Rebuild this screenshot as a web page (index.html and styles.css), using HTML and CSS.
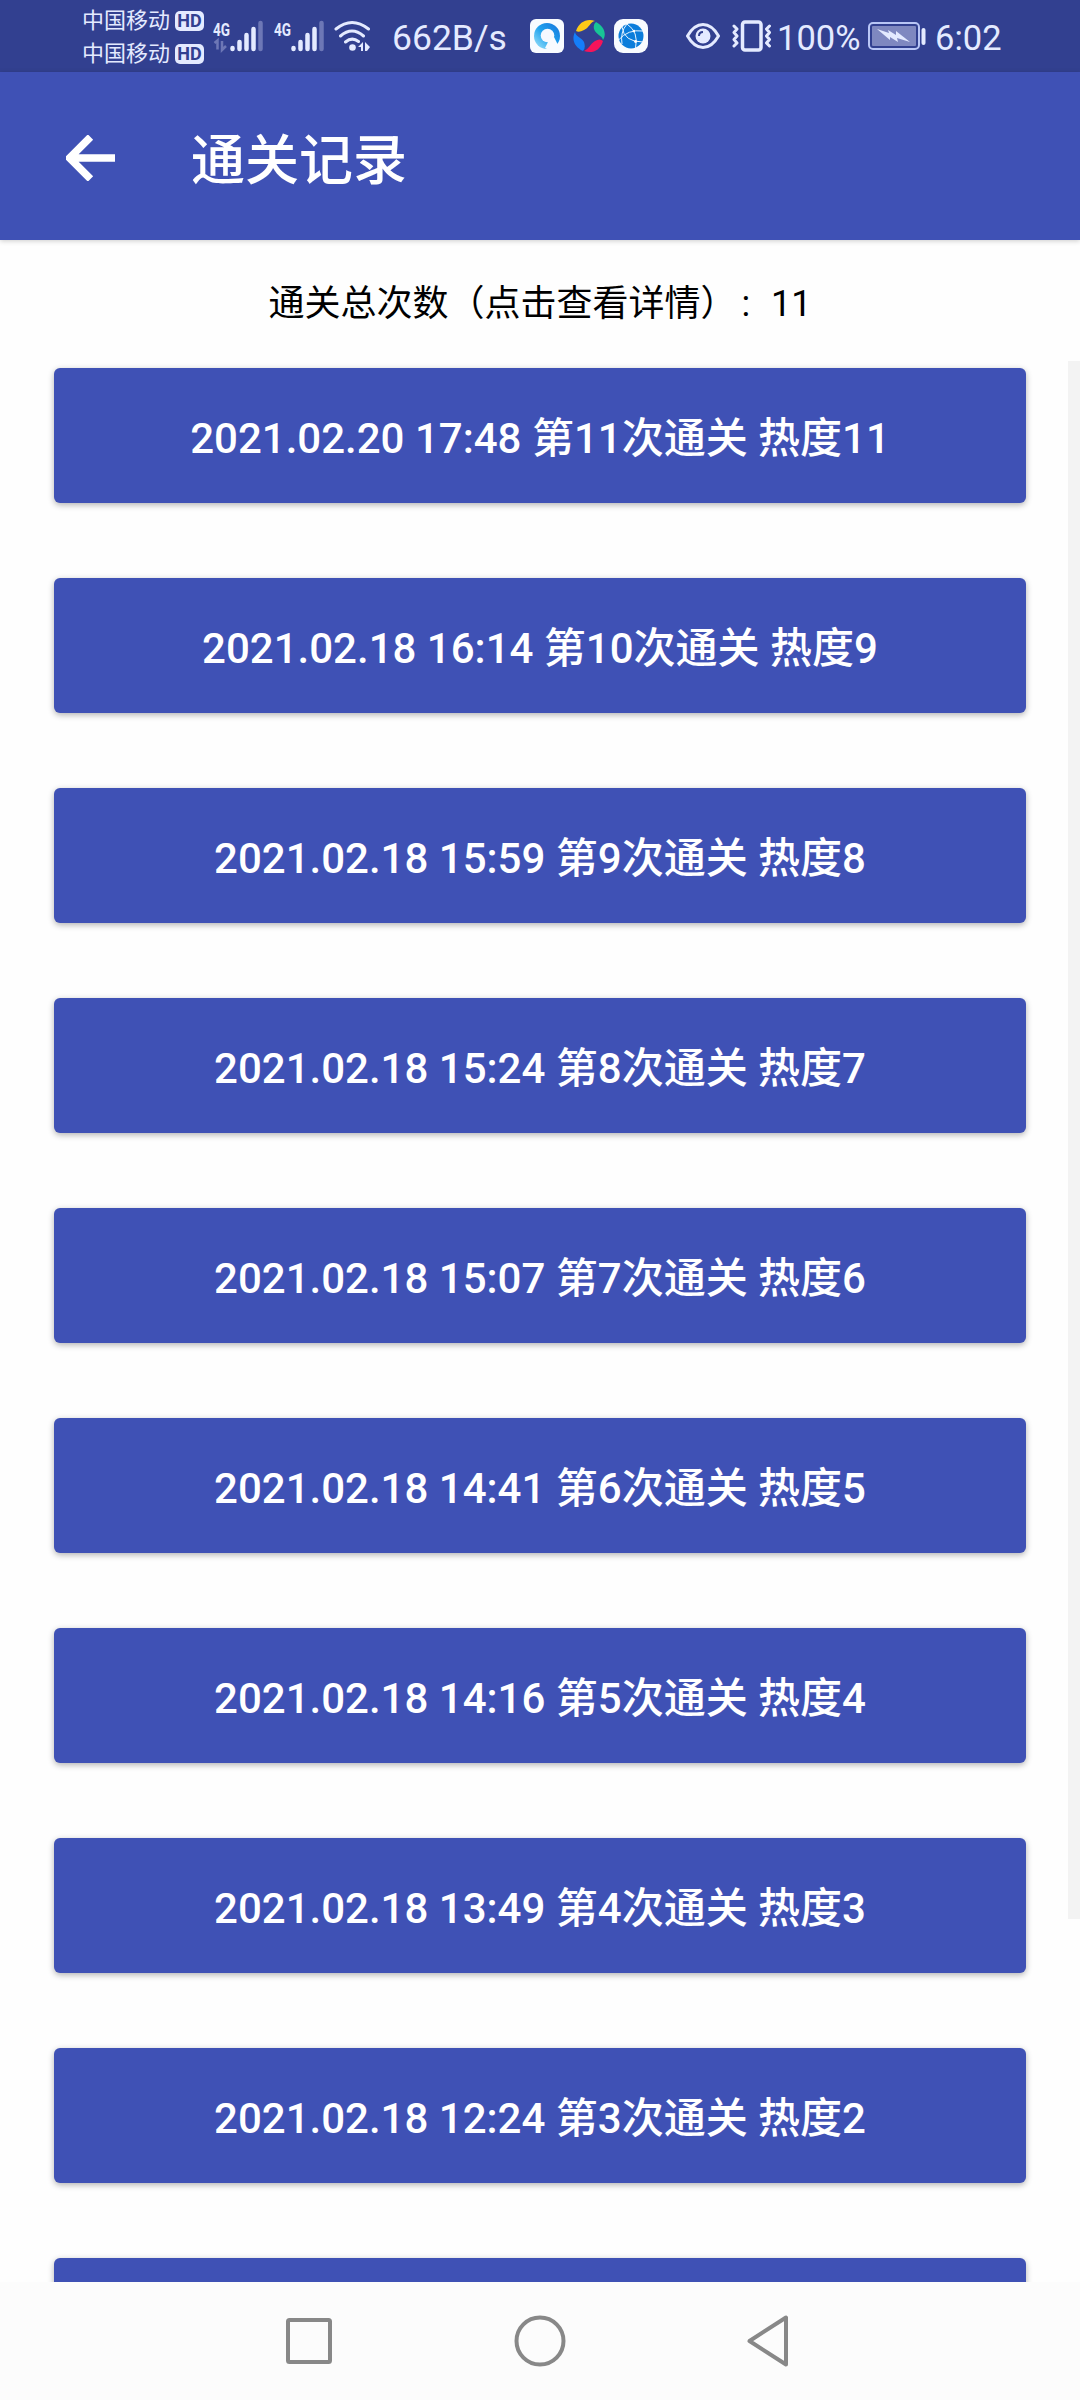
FILE: index.html
```html
<!DOCTYPE html>
<html lang="zh-CN">
<head>
    <meta charset="UTF-8">
    <meta name="viewport" content="width=device-width, initial-scale=1.0">
    <title>通关记录</title>
    <link rel="stylesheet" href="styles.css">
</head>
<body>
    <div class="screen">
        <div class="status-bar">
            <div class="carriers">
                <div class="carrier">中国移动<span class="hd">HD</span></div>
                <div class="carrier">中国移动<span class="hd">HD</span></div>
            </div>
            <svg class="signal" width="52" height="34" viewBox="0 0 52 34">
                <text class="net" x="0" y="17" textLength="17" lengthAdjust="spacingAndGlyphs">4G</text>
                <path class="dim-line" d="M1.500 24l3-2.500v9M9 22v9l4-4"/>
                <path class="bars" d="M19.500 29v1M26.500 23v7M33.500 16v14M40.500 10v20"/>
                <path class="bars dim" d="M47.500 4v26"/>
            </svg>
            <svg class="signal signal-2" width="52" height="34" viewBox="0 0 52 34">
                <text class="net" x="0" y="17" textLength="17" lengthAdjust="spacingAndGlyphs">4G</text>
                <path class="bars" d="M19.500 29v1M26.500 23v7M33.500 16v14M40.500 10v20"/>
                <path class="bars dim" d="M47.500 4v26"/>
            </svg>
            <svg class="wifi" width="38" height="32" viewBox="0 0 38 32">
                <path class="line" d="M2 9Q18 -4 34.500 9M6.500 16Q18 6 29.500 16M11.500 22Q18 16.500 24.500 21.500"/>
                <circle class="solid" cx="18.500" cy="27.500" r="3.300"/>
                <path class="solid" d="M24 27l5-5v9h-2v-4zM31 22l5 5-3 4h-2z"/>
            </svg>
            <span class="speed">662B/s</span>
            <svg class="app" width="34" height="34" viewBox="0 0 34 34">
                <defs>
                    <linearGradient id="ring" x1="0" y1="1" x2="1" y2="0">
                        <stop offset="0" stop-color="#a5e6fa"/>
                        <stop offset="0.500" stop-color="#1fa2ee"/>
                        <stop offset="1" stop-color="#1673dc"/>
                    </linearGradient>
                </defs>
                <rect width="34" height="34" rx="6" fill="#f8fbff"/>
                <circle cx="17" cy="17" r="13" fill="url(#ring)"/>
                <circle cx="17.500" cy="16.500" r="6.800" fill="#f5f8ff"/>
                <path d="M19 21l5-3 6 12-11 1-4-2z" fill="#f8fbff"/>
            </svg>
            <svg class="app" width="34" height="34" viewBox="0 0 34 34">
                <path d="M4 12C7 3 15-1 23 2C18 3 17 9 12 11Q7 14 4 12z" fill="#fcca17"/>
                <path d="M24 3C32 7 35 15 31 21C30 16 24 16 22 10Q21 5 24 3z" fill="#18c596"/>
                <path d="M31 22C28 32 20 35 12 32C17 30 18 25 23 22Q28 19 31 22z" fill="#f5145a"/>
                <path d="M11 32C3 28-1 21 3 13C4 18 9 18 12 23Q14 29 11 32z" fill="#147efa"/>
            </svg>
            <svg class="app" width="34" height="34" viewBox="0 0 34 34">
                <rect width="34" height="34" rx="9" fill="#f8fbff"/>
                <circle cx="17" cy="17" r="12.500" fill="#0b7ddb"/>
                <path class="globe-line" d="M13 5Q25 13 21.500 29M4.500 21Q14 10 29 12M8 8Q10 23 29 23M13 5Q6 13 8 25"/>
                <circle cx="20" cy="12" r="1.200" fill="#fff"/>
                <circle cx="21.500" cy="22.500" r="1.400" fill="#fff"/>
            </svg>
            <svg class="eye" width="34" height="26" viewBox="0 0 34 26">
                <path class="line" d="M1.500 13Q8 1.500 17 1.500T32.500 13Q26 24.500 17 24.500T1.500 13z"/>
                <circle class="solid" cx="17" cy="13" r="7.500"/>
                <path class="glint" d="M13 13q0-4 4-4"/>
            </svg>
            <svg class="vibrate" width="42" height="32" viewBox="0 0 42 32">
                <rect class="phone" x="11.500" y="2" width="18.500" height="28" rx="2.500"/>
                <path class="line" d="M3 6l3 3-3 3.500 3 3.500-3 3.500 3 3.500-3 3M38.500 6l-3 3 3 3.500-3 3.500 3 3.500-3 3.500 3 3"/>
            </svg>
            <span class="percent">100%</span>
            <svg class="battery" width="58" height="28" viewBox="0 0 58 28">
                <rect class="cell" x="1" y="1" width="50" height="26" rx="4"/>
                <rect class="charge" x="4" y="4" width="44" height="20" rx="1"/>
                <path class="solid" d="M9 7l12 4-1-3 8 5 0-4 14 11-13-4 1 4-8-5 0 3z"/>
                <rect class="solid" x="53.500" y="6" width="4" height="17" rx="2"/>
            </svg>
            <span class="clock">6:02</span>
        </div>

        <div class="app-bar">
            <svg class="back" width="50" height="46" viewBox="0 0 50 46">
                <path d="M49 23H4M24.500 2L3.500 23L24.500 44"/>
            </svg>
            <h1>通关记录</h1>
        </div>

        <div class="content">
            <p class="total">通关总次数（点击查看详情）<span class="colon">:</span> 11</p>
            <div class="list">
                <button class="record">2021.02.20 17:48 第11次通关 热度11</button>
                <button class="record">2021.02.18 16:14 第10次通关 热度9</button>
                <button class="record">2021.02.18 15:59 第9次通关 热度8</button>
                <button class="record">2021.02.18 15:24 第8次通关 热度7</button>
                <button class="record">2021.02.18 15:07 第7次通关 热度6</button>
                <button class="record">2021.02.18 14:41 第6次通关 热度5</button>
                <button class="record">2021.02.18 14:16 第5次通关 热度4</button>
                <button class="record">2021.02.18 13:49 第4次通关 热度3</button>
                <button class="record">2021.02.18 12:24 第3次通关 热度2</button>
                <button class="record"></button>
                <div class="scrollbar"></div>
            </div>
        </div>

        <div class="nav-bar">
            <svg width="56" height="56" viewBox="0 0 56 56"><rect x="7" y="7" width="42" height="42" rx="1.500"/></svg>
            <svg width="56" height="56" viewBox="0 0 56 56"><circle cx="28" cy="28" r="23.500"/></svg>
            <svg width="56" height="56" viewBox="0 0 56 56"><path d="M6.500 28L43 4.500V51.500z"/></svg>
        </div>
    </div>
</body>
</html>
```

FILE: styles.css
```css
* {
    box-sizing: border-box;
}
body {
    margin: 0;
    font-family: Roboto, "Noto Sans CJK SC", sans-serif;
    background: #fefefe;
}
.screen {
    width: 1080px;
    height: 2400px;
    display: flex;
    flex-direction: column;
    overflow: hidden;
}

/* status bar */
.status-bar {
    height: 72px;
    flex: none;
    display: flex;
    align-items: center;
    padding-left: 82px;
    background: #324090;
    color: #e4eaff;
    white-space: nowrap;
}
.status-bar svg,
.status-bar span {
    flex: none;
}
.carriers {
    width: 122px;
    margin: 2px 9px 0 0;
}
.carrier {
    display: flex;
    align-items: center;
    justify-content: space-between;
    height: 33px;
    font-size: 22px;
    line-height: 33px;
}
.hd {
    width: 29px;
    height: 20px;
    border-radius: 5px;
    background: #e4eaff;
    color: #324090;
    font-size: 18px;
    font-weight: 700;
    line-height: 20px;
    text-align: center;
}
.net {
    font-size: 19px;
    font-weight: 700;
    fill: #e4eaff;
}
.signal-2 {
    margin-left: 9px;
}
.bars {
    stroke: #e4eaff;
    stroke-width: 4.5;
    stroke-linecap: round;
}
.dim {
    stroke: #6d77b6;
}
.dim-line {
    fill: none;
    stroke: #6d77b6;
    stroke-width: 2.5;
}
.line {
    fill: none;
    stroke: #e4eaff;
    stroke-width: 3;
    stroke-linecap: round;
    stroke-linejoin: round;
}
.solid {
    fill: #e4eaff;
}
.wifi {
    margin-left: 8px;
}
.speed {
    width: 117px;
    margin: 4px 0 0 20px;
    font-size: 35.5px;
}
.app {
    margin-left: 21px;
}
.app + .app {
    margin-left: 8px;
}
.globe-line {
    fill: none;
    stroke: #e8f4ff;
    stroke-width: 1;
}
.eye {
    margin-left: 38px;
}
.glint {
    fill: none;
    stroke: #324090;
    stroke-width: 2;
}
.vibrate {
    margin-left: 11px;
}
.phone {
    fill: none;
    stroke: #e4eaff;
    stroke-width: 3.5;
}
.percent {
    width: 84px;
    margin: 4px 0 0 4px;
    font-size: 34.5px;
}
.battery {
    margin-left: 7px;
}
.cell {
    fill: none;
    stroke: #b9c6f6;
    stroke-width: 2;
}
.charge {
    fill: #7f88c0;
}
.clock {
    margin: 4px 0 0 9px;
    font-size: 34.5px;
}

/* title bar */
.app-bar {
    position: relative;
    height: 168px;
    flex: none;
    display: flex;
    align-items: center;
    padding: 4px 0 0 66px;
    background: #3f51b5;
    box-shadow: 0 1px 5px rgba(0, 0, 0, 0.2);
}
.back path {
    fill: none;
    stroke: #fff;
    stroke-width: 7.5;
}
.app-bar h1 {
    margin: 7px 0 0 75px;
    color: #fff;
    font-size: 54px;
    font-weight: 500;
    line-height: 64px;
}

/* records */
.content {
    flex: 1;
    min-height: 0;
    display: flex;
    flex-direction: column;
    overflow: hidden;
}
.total {
    height: 121px;
    flex: none;
    margin: 0;
    padding-top: 4px;
    color: #000;
    font-size: 36px;
    line-height: 121px;
    text-align: center;
}
.colon {
    margin: 0 12px 0 5px;
}
.list {
    position: relative;
    flex: 1;
    min-height: 0;
    display: flex;
    flex-direction: column;
    gap: 75px;
    padding: 7px 54px 0;
    overflow: hidden;
}
.record {
    height: 135px;
    flex: none;
    padding: 0 0 3px;
    border: none;
    border-radius: 6px;
    background: #3f51b5;
    box-shadow: 0 2px 6px rgba(0, 0, 0, 0.3);
    color: #fff;
    font-family: inherit;
    font-size: 42px;
    font-weight: 500;
}
.scrollbar {
    position: absolute;
    top: 0;
    right: 0;
    width: 12px;
    height: 1558px;
    background: #f3f3f3;
}

/* system navigation */
.nav-bar {
    height: 118px;
    flex: none;
    display: flex;
    justify-content: center;
    align-items: center;
    gap: 175px;
    background: #fcfcfc;
}
.nav-bar svg {
    fill: none;
    stroke: #888;
    stroke-width: 4;
    stroke-linejoin: round;
}
```
